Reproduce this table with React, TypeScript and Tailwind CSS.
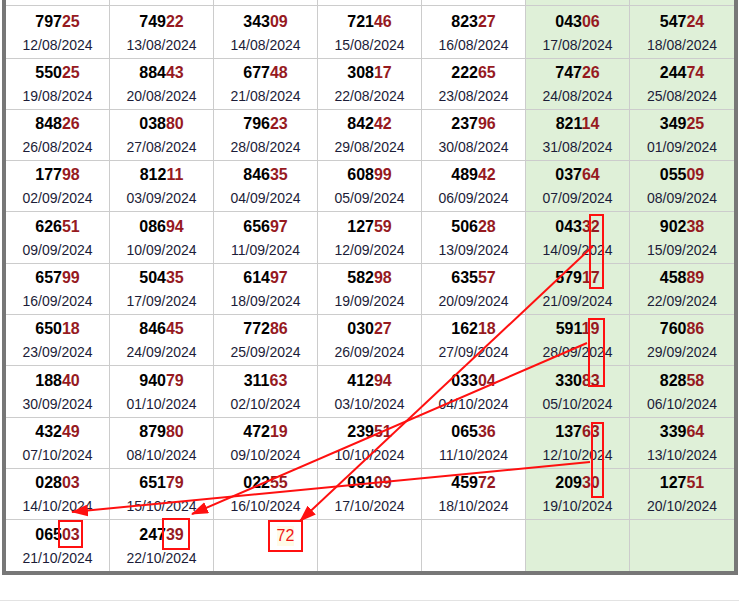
import React from "react";

type Cell = { n: string; d: string } | null;

const rows: Cell[][] = [
  [
    { n: "79725", d: "12/08/2024" },
    { n: "74922", d: "13/08/2024" },
    { n: "34309", d: "14/08/2024" },
    { n: "72146", d: "15/08/2024" },
    { n: "82327", d: "16/08/2024" },
    { n: "04306", d: "17/08/2024" },
    { n: "54724", d: "18/08/2024" },
  ],
  [
    { n: "55025", d: "19/08/2024" },
    { n: "88443", d: "20/08/2024" },
    { n: "67748", d: "21/08/2024" },
    { n: "30817", d: "22/08/2024" },
    { n: "22265", d: "23/08/2024" },
    { n: "74726", d: "24/08/2024" },
    { n: "24474", d: "25/08/2024" },
  ],
  [
    { n: "84826", d: "26/08/2024" },
    { n: "03880", d: "27/08/2024" },
    { n: "79623", d: "28/08/2024" },
    { n: "84242", d: "29/08/2024" },
    { n: "23796", d: "30/08/2024" },
    { n: "82114", d: "31/08/2024" },
    { n: "34925", d: "01/09/2024" },
  ],
  [
    { n: "17798", d: "02/09/2024" },
    { n: "81211", d: "03/09/2024" },
    { n: "84635", d: "04/09/2024" },
    { n: "60899", d: "05/09/2024" },
    { n: "48942", d: "06/09/2024" },
    { n: "03764", d: "07/09/2024" },
    { n: "05509", d: "08/09/2024" },
  ],
  [
    { n: "62651", d: "09/09/2024" },
    { n: "08694", d: "10/09/2024" },
    { n: "65697", d: "11/09/2024" },
    { n: "12759", d: "12/09/2024" },
    { n: "50628", d: "13/09/2024" },
    { n: "04332", d: "14/09/2024" },
    { n: "90238", d: "15/09/2024" },
  ],
  [
    { n: "65799", d: "16/09/2024" },
    { n: "50435", d: "17/09/2024" },
    { n: "61497", d: "18/09/2024" },
    { n: "58298", d: "19/09/2024" },
    { n: "63557", d: "20/09/2024" },
    { n: "57917", d: "21/09/2024" },
    { n: "45889", d: "22/09/2024" },
  ],
  [
    { n: "65018", d: "23/09/2024" },
    { n: "84645", d: "24/09/2024" },
    { n: "77286", d: "25/09/2024" },
    { n: "03027", d: "26/09/2024" },
    { n: "16218", d: "27/09/2024" },
    { n: "59119", d: "28/09/2024" },
    { n: "76086", d: "29/09/2024" },
  ],
  [
    { n: "18840", d: "30/09/2024" },
    { n: "94079", d: "01/10/2024" },
    { n: "31163", d: "02/10/2024" },
    { n: "41294", d: "03/10/2024" },
    { n: "03304", d: "04/10/2024" },
    { n: "33083", d: "05/10/2024" },
    { n: "82858", d: "06/10/2024" },
  ],
  [
    { n: "43249", d: "07/10/2024" },
    { n: "87980", d: "08/10/2024" },
    { n: "47219", d: "09/10/2024" },
    { n: "23951", d: "10/10/2024" },
    { n: "06536", d: "11/10/2024" },
    { n: "13763", d: "12/10/2024" },
    { n: "33964", d: "13/10/2024" },
  ],
  [
    { n: "02803", d: "14/10/2024" },
    { n: "65179", d: "15/10/2024" },
    { n: "02255", d: "16/10/2024" },
    { n: "09109", d: "17/10/2024" },
    { n: "45972", d: "18/10/2024" },
    { n: "20930", d: "19/10/2024" },
    { n: "12751", d: "20/10/2024" },
  ],
  [
    { n: "06503", d: "21/10/2024" },
    { n: "24739", d: "22/10/2024" },
    null,
    null,
    null,
    null,
    null,
  ],
];

const rowHeights = [
  "h-[52px]",
  "h-[50px]",
  "h-[50px]",
  "h-[50px]",
  "h-[51px]",
  "h-[50px]",
  "h-[50px]",
  "h-[51px]",
  "h-[50px]",
  "h-[50px]",
  "h-[51px]",
];

const gridCols = "grid grid-cols-[103px_103px_103px_103px_103px_103px_104px] gap-px";

function CellView({ cell, green }: { cell: Cell; green: boolean }) {
  return (
    <div
      className={`${green ? "bg-[#dff0d8]" : "bg-white"} flex flex-col items-center justify-end pb-[4px]`}
    >
      {cell && (
        <>
          <div className="text-[16px] leading-[20px] font-bold text-black">
            {cell.n.slice(0, 3)}
            <span className="text-[#961a1f]">{cell.n.slice(3)}</span>
          </div>
          <div className="mt-[4px] text-[14px] leading-[18px] text-[#1c1c38]">{cell.d}</div>
        </>
      )}
    </div>
  );
}

export default function App() {
  return (
    <div
      className="relative w-[739px] h-[605px] overflow-hidden bg-white"
      style={{ fontFamily: '"Liberation Sans", Arial, sans-serif' }}
    >
      <div className="ml-[2px] w-[736px] border-l-4 border-r-4 border-b-4 border-[#777777] bg-[#cccccc] flex flex-col gap-px">
        <div className={`${gridCols} h-[5px]`}>
          {[0, 1, 2, 3, 4, 5, 6].map((i) => (
            <div key={i} className={i >= 5 ? "bg-[#dff0d8]" : "bg-white"} />
          ))}
        </div>
        {rows.map((r, ri) => (
          <div key={ri} className={`${gridCols} ${rowHeights[ri]}`}>
            {r.map((c, ci) => (
              <CellView key={ci} cell={c} green={ci >= 5} />
            ))}
          </div>
        ))}
      </div>
      <div className="absolute left-0 right-0 top-[600px] h-px bg-[#e3e3e3]" />

      {/* highlight boxes */}
      <div className="absolute left-[589px] top-[214px] w-[15px] h-[75px] border-2 border-[#ff1010]" />
      <div className="absolute left-[588px] top-[318px] w-[17px] h-[69px] border-2 border-[#ff1010]" />
      <div className="absolute left-[591px] top-[422px] w-[13px] h-[76px] border-2 border-[#ff1010]" />
      <div className="absolute left-[58px] top-[520px] w-[25px] h-[28px] border-2 border-[#ff1010]" />
      <div className="absolute left-[162px] top-[518px] w-[28px] h-[32px] border-2 border-[#ff1010]" />
      <div className="absolute left-[268px] top-[520px] w-[35px] h-[32px] border-2 border-[#ff1010] flex items-center justify-center">
        <span className="text-[16px] leading-[20px] text-[#f01818] bg-[#fffbe8]">72</span>
      </div>

      <svg className="absolute left-0 top-0 pointer-events-none" width="739" height="605">
        <defs>
          <marker
            id="ah"
            markerWidth="17"
            markerHeight="12"
            refX="16"
            refY="6"
            orient="auto"
            markerUnits="userSpaceOnUse"
          >
            <path d="M0,0 L17,6 L0,12 z" fill="#ff1010" />
          </marker>
        </defs>
        <line x1="593" y1="246" x2="300" y2="521" stroke="#ff1010" strokeWidth="2" markerEnd="url(#ah)" />
        <line x1="587" y1="343" x2="192" y2="514" stroke="#ff1010" strokeWidth="2" markerEnd="url(#ah)" />
        <line x1="590" y1="462" x2="72" y2="512" stroke="#ff1010" strokeWidth="2" markerEnd="url(#ah)" />
      </svg>
    </div>
  );
}
